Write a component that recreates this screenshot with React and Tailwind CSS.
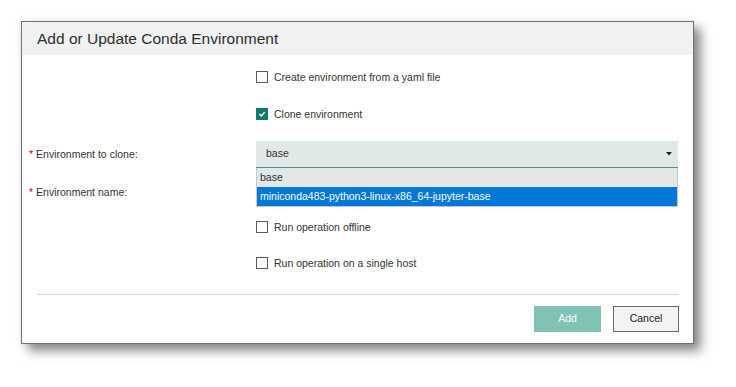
import React from 'react';

const Checkbox = ({ checked, label }) => (
  <div className="flex items-center h-[24px]">
    {checked ? (
      <span className="w-[12px] h-[12px] bg-[#0e7c69] flex items-center justify-center">
        <svg width="8" height="8" viewBox="0 0 8 8">
          <path d="M1.3 4.1 L3.2 5.9 L6.7 2.2" fill="none" stroke="white" strokeWidth="1.4" />
        </svg>
      </span>
    ) : (
      <span className="w-[12px] h-[12px] border border-[#5b5b5b] bg-white" />
    )}
    <span className="ml-[6px] text-[10.5px] leading-none">{label}</span>
  </div>
);

const Label = ({ children }) => (
  <div className="pl-[7px] text-[10.5px] leading-none flex items-center">
    <span className="text-[#d0021b] mr-[3px]">*</span>
    {children}
  </div>
);

export default function App() {
  return (
    <div className="w-[736px] h-[387px] bg-white pt-[21px] pl-[21px] font-['Liberation_Sans',Arial,sans-serif] text-[#333]">
      <div className="w-[673px] border border-[#6f6f6f] bg-white flex flex-col shadow-[7px_7px_10px_rgba(0,0,0,0.45),0_0_8px_rgba(0,0,0,0.08)]">
        <div className="h-[33px] bg-[#f0f1f3] flex items-center pl-[15px] text-[15.5px] text-[#2f2f2f]">
          Add or Update Conda Environment
        </div>

        <div className="grid grid-cols-[234px_422px] pt-[10px]">
          <div />
          <Checkbox label="Create environment from a yaml file" />

          <div className="h-[13px] col-span-2" />
          <div />
          <Checkbox checked label="Clone environment" />

          <div className="h-[15px] col-span-2" />
          <Label>Environment to clone:</Label>
          <div className="relative">
            <div className="h-[27px] bg-[#e1e9e8] border-b border-[#3f9a87] flex items-center justify-between pl-[10px] pr-[6px] text-[10.5px]">
              <span>base</span>
              <svg width="6" height="4" viewBox="0 0 6 4">
                <path d="M0 0 H6 L3 3.5 Z" fill="#222" />
              </svg>
            </div>
            <div className="absolute left-0 right-0 top-full z-10 border border-t-0 border-[#c4caca] text-[10.5px]">
              <div className="h-[19px] bg-[#e2e8e8] flex items-center pl-[3px]">base</div>
              <div className="h-[19px] bg-[#0078d7] text-white flex items-center pl-[3px]">
                miniconda483-python3-linux-x86_64-jupyter-base
              </div>
            </div>
          </div>

          <div className="h-[10px] col-span-2" />
          <Label>Environment name:</Label>
          <div className="h-[28px] bg-[#e1e9e8] border-b border-[#3f9a87]" />

          <div className="h-[9px] col-span-2" />
          <div />
          <Checkbox label="Run operation offline" />

          <div className="h-[12px] col-span-2" />
          <div />
          <Checkbox label="Run operation on a single host" />
        </div>

        <div className="mt-[19px] ml-[15px] mr-[14px] h-px bg-[#cfdcdb]" />

        <div className="flex justify-end gap-[12px] mt-[11px] mb-[11px] mr-[14px] text-[10.5px]">
          <button className="w-[67px] h-[26px] bg-[#80c2b5] text-white">Add</button>
          <button className="w-[66px] h-[26px] bg-[#f2f3f5] border border-[#6b6b6b] text-[#222]">Cancel</button>
        </div>
      </div>
    </div>
  );
}
